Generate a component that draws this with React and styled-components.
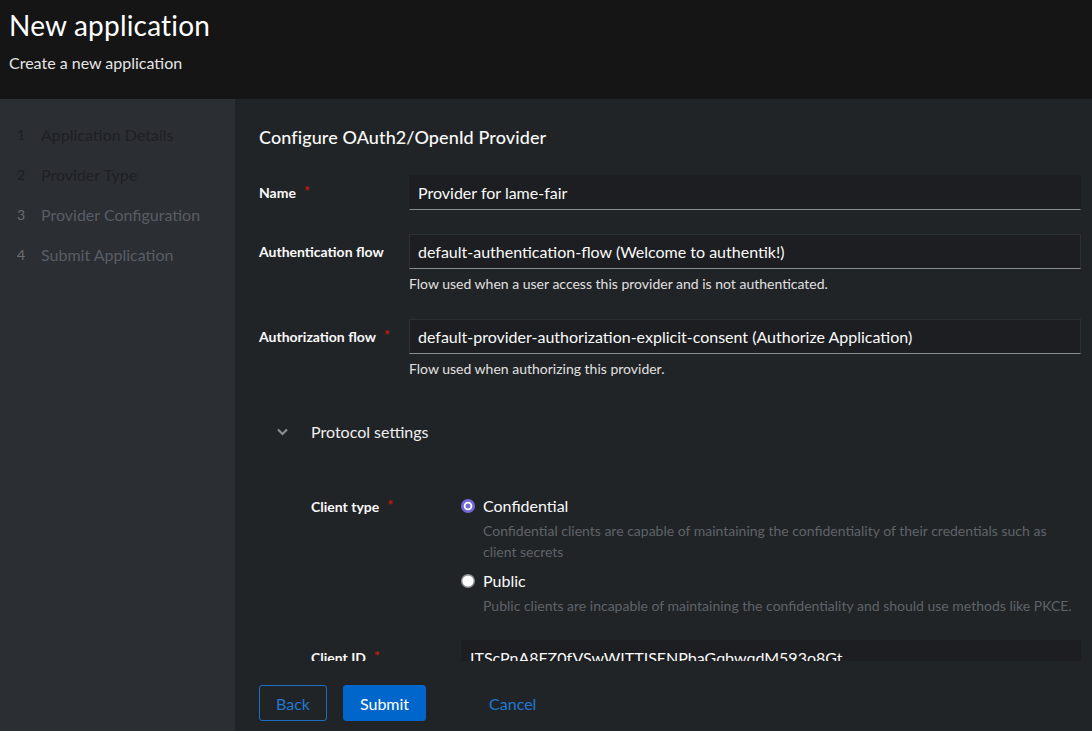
import React from "react";
import styled, { createGlobalStyle } from "styled-components";

const Global = createGlobalStyle`
  html, body { margin: 0; padding: 0; background: #212427; }
  body { font-family: Lato, "Noto Sans", sans-serif; color: #fafafa; }
  * { box-sizing: border-box; }
`;

const Page = styled.div`
  width: 1092px;
  height: 731px;
  display: flex;
  flex-direction: column;
  overflow: hidden;
`;

const Header = styled.header`
  height: 99px;
  flex: none;
  background: #151515;
  padding: 5px 9px 0;
`;

const PageTitle = styled.h1`
  margin: 0;
  font-size: 28px;
  font-weight: 400;
  line-height: 40px;
  color: #ffffff;
  letter-spacing: 0.2px;
`;

const PageSubtitle = styled.p`
  margin: 6px 0 0;
  font-size: 16px;
  line-height: 24px;
  color: #e6e6e6;
`;

const Body = styled.div`
  flex: 1;
  display: flex;
  min-height: 0;
`;

const Sidebar = styled.nav`
  width: 235px;
  flex: none;
  background: #2b2e33;
  padding: 15px 0 0 0;
`;

const Step = styled.div`
  height: 40px;
  display: flex;
  align-items: center;
  padding-left: 17px;
  font-size: 16px;
  color: ${(p) => (p.$done ? "#1e2024" : "#595e65")};
`;

const StepNum = styled.span`
  width: 24px;
  font-size: 14px;
  color: ${(p) => (p.$done ? "#1e2024" : "#6a6e73")};
`;

const Main = styled.main`
  flex: 1;
  display: flex;
  flex-direction: column;
  min-width: 0;
  background: #212427;
`;

const Scroll = styled.div`
  flex: 1;
  overflow: hidden;
  padding: 24px 11px 0 24px;
`;

const FormTitle = styled.h2`
  margin: 0 0 24px;
  font-size: 18px;
  font-weight: 500;
  line-height: 28px;
  color: #fafafa;
  letter-spacing: 0.1px;
`;

const Row = styled.div`
  display: grid;
  grid-template-columns: 150px 1fr;
  margin-bottom: 24px;
`;

const Label = styled.label`
  height: 35px;
  display: flex;
  align-items: center;
  font-size: 14px;
  font-weight: 700;
  color: #fafafa;
`;

const Req = styled.span`
  color: #c9190b;
  margin-left: 8px;
  font-weight: 700;
  position: relative;
  top: -2px;
`;

const Input = styled.div`
  height: 35px;
  display: flex;
  align-items: center;
  padding: 0 8px;
  background: #1c1e21;
  border: 1px solid ${(p) => (p.$plain ? "#1c1e21" : "#2c2f33")};
  border-bottom-color: ${(p) => (p.$noline ? "#1c1e21" : "#8a8d90")};
  font-size: 16px;
  color: #fafafa;
  white-space: nowrap;
  overflow: hidden;
`;

const Helper = styled.div`
  margin-top: 4px;
  padding-bottom: 1px;
  font-size: 14px;
  line-height: 21px;
  color: #e0e0e0;
`;

const Toggle = styled.div`
  display: flex;
  align-items: center;
  padding: 16px 0 17px 18px;
  font-size: 16px;
  line-height: 24px;
  color: #f0f0f0;
`;

const ToggleIcon = styled.span`
  width: 34px;
  display: flex;
  align-items: center;
`;

const Section = styled.div`
  padding: 33px 0 0 52px;
`;

const RadioGroup = styled.div`
  display: flex;
  flex-direction: column;
  gap: 7px;
`;

const RadioItem = styled.div`
  display: grid;
  grid-template-columns: 22px 1fr;
  align-items: center;
`;

const RadioLabel = styled.span`
  font-size: 16px;
  line-height: 24px;
  color: #fafafa;
`;

const RadioDesc = styled.div`
  grid-column: 2;
  margin-top: 2px;
  font-size: 14px;
  line-height: 21px;
  color: #5f6369;
`;

const ClientLabel = styled(Label)`
  align-items: flex-start;
  height: auto;
  padding-top: 4px;
`;

const Footer = styled.footer`
  height: 70px;
  flex: none;
  display: flex;
  align-items: flex-start;
  padding: 24px 0 0 24px;
  background: #212427;
`;

const Button = styled.button`
  height: 36px;
  padding: 0 16px;
  font-family: inherit;
  font-size: 16px;
  border-radius: 3px;
  cursor: pointer;
  margin-right: ${(p) => p.$mr || "0"};
  background: ${(p) => (p.$primary ? "#0066cc" : "transparent")};
  color: ${(p) => (p.$primary ? "#ffffff" : "#1f78d1")};
  border: 1px solid ${(p) => (p.$outline ? "#1b6ec2" : p.$primary ? "#0066cc" : "transparent")};
`;

const Chevron = () => (
  <svg width="11" height="8" viewBox="0 0 11 8">
    <path d="M1 1.5 L5.5 6 L10 1.5" stroke="#8a8d90" strokeWidth="2.2" fill="none" />
  </svg>
);

const RadioDot = ({ checked }) =>
  checked ? (
    <svg width="14" height="14" viewBox="0 0 14 14">
      <circle cx="7" cy="7" r="7" fill="#7467d9" />
      <circle cx="7" cy="7" r="3.4" fill="#7467d9" stroke="#ffffff" strokeWidth="1.8" />
    </svg>
  ) : (
    <svg width="14" height="14" viewBox="0 0 14 14">
      <circle cx="7" cy="7" r="6.3" fill="#ffffff" stroke="#8a8d90" strokeWidth="1.4" />
    </svg>
  );

const steps = [
  { n: 1, t: "Application Details", done: true },
  { n: 2, t: "Provider Type", done: true },
  { n: 3, t: "Provider Configuration" },
  { n: 4, t: "Submit Application" },
];

export default function App() {
  return (
    <Page>
      <Global />
      <Header>
        <PageTitle>New application</PageTitle>
        <PageSubtitle>Create a new application</PageSubtitle>
      </Header>
      <Body>
        <Sidebar>
          {steps.map((s) => (
            <Step key={s.n} $done={s.done}>
              <StepNum $done={s.done}>{s.n}</StepNum>
              {s.t}
            </Step>
          ))}
        </Sidebar>
        <Main>
          <Scroll>
            <FormTitle>Configure OAuth2/OpenId Provider</FormTitle>
            <Row>
              <Label>
                Name<Req>*</Req>
              </Label>
              <Input $plain>Provider for lame-fair</Input>
            </Row>
            <Row>
              <Label>Authentication flow</Label>
              <div>
                <Input>default-authentication-flow (Welcome to authentik!)</Input>
                <Helper>Flow used when a user access this provider and is not authenticated.</Helper>
              </div>
            </Row>
            <Row>
              <Label>
                Authorization flow<Req>*</Req>
              </Label>
              <div>
                <Input>default-provider-authorization-explicit-consent (Authorize Application)</Input>
                <Helper>Flow used when authorizing this provider.</Helper>
              </div>
            </Row>
            <Toggle>
              <ToggleIcon>
                <Chevron />
              </ToggleIcon>
              Protocol settings
            </Toggle>
            <Section>
              <Row>
                <ClientLabel>
                  Client type<Req>*</Req>
                </ClientLabel>
                <RadioGroup>
                  <RadioItem>
                    <RadioDot checked />
                    <RadioLabel>Confidential</RadioLabel>
                    <RadioDesc>
                      Confidential clients are capable of maintaining the confidentiality of their credentials such as client secrets
                    </RadioDesc>
                  </RadioItem>
                  <RadioItem>
                    <RadioDot />
                    <RadioLabel>Public</RadioLabel>
                    <RadioDesc>
                      Public clients are incapable of maintaining the confidentiality and should use methods like PKCE.
                    </RadioDesc>
                  </RadioItem>
                </RadioGroup>
              </Row>
              <Row>
                <Label>
                  Client ID<Req>*</Req>
                </Label>
                <Input $plain $noline>ITScPnA8FZ0fVSwWITTISENPbaGqbwqdM593o8Gt</Input>
              </Row>
            </Section>
          </Scroll>
          <Footer>
            <Button $outline $mr="16px">Back</Button>
            <Button $primary $mr="46px">Submit</Button>
            <Button $link>Cancel</Button>
          </Footer>
        </Main>
      </Body>
    </Page>
  );
}
